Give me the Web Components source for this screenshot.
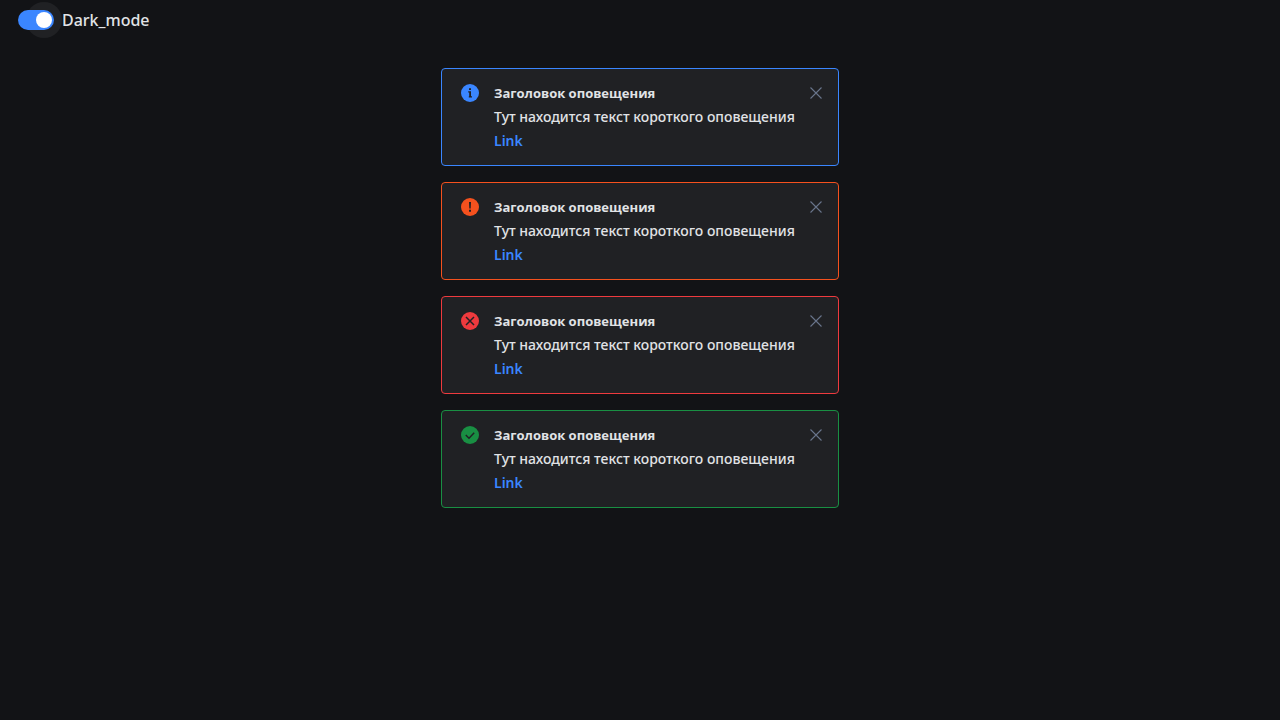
<!DOCTYPE html>
<html lang="ru">
<head>
<meta charset="utf-8">
<title>Alerts</title>
<style>
body { margin: 0; background: #121316; color: #e1e3e6; font-family: "Noto Sans", sans-serif; }
</style>
</head>
<body>
<alert-page></alert-page>

<template id="page-template">
<style>
:host { display: block; min-height: 100vh; }
main { display: grid; gap: 16px; width: 100%; max-width: 398px; margin: 28px auto 0; }
</style>
<header><mode-switch>Dark_mode</mode-switch></header>
<main>
<alert-card kind="info"><span slot="title">Заголовок оповещения</span>Тут находится текст короткого оповещения<span slot="link">Link</span></alert-card>
<alert-card kind="warning"><span slot="title">Заголовок оповещения</span>Тут находится текст короткого оповещения<span slot="link">Link</span></alert-card>
<alert-card kind="error"><span slot="title">Заголовок оповещения</span>Тут находится текст короткого оповещения<span slot="link">Link</span></alert-card>
<alert-card kind="success"><span slot="title">Заголовок оповещения</span>Тут находится текст короткого оповещения<span slot="link">Link</span></alert-card>
</main>
</template>

<template id="switch-template">
<style>
:host { display: flex; height: 40px; padding-left: 18px; }
label { display: flex; align-items: center; gap: 8px; font-size: 16px; font-weight: 500; line-height: 24px; cursor: pointer; }
input { appearance: none; display: flex; align-items: center; box-sizing: border-box; width: 36px; height: 20px; margin: 0; padding: 2px; border-radius: 10px; background: #6b7280; cursor: pointer; }
input::before { content: ""; width: 16px; height: 16px; border-radius: 50%; background: #fff; }
input:checked { background: #3a86ff; justify-content: flex-end; }
.track { position: relative; display: flex; isolation: isolate; }
.track::before { content: ""; position: absolute; z-index: -1; top: -8px; right: -8px; width: 36px; height: 36px; border-radius: 50%; background: #202124; }
</style>
<label><span class="track"><input type="checkbox" role="switch" checked></span><slot></slot></label>
</template>

<template id="card-template">
<style>
:host { --accent: #3a86ff; display: flex; box-sizing: border-box; padding: 12px 11px 12px 16px; border: 1px solid var(--accent); border-radius: 4px; background: #202124; font-size: 14px; line-height: 24px; }
:host([kind="warning"]) { --accent: #f5511e; }
:host([kind="error"]) { --accent: #ee3a3e; }
:host([kind="success"]) { --accent: #198f43; }
.icon { flex: none; width: 24px; height: 24px; margin-right: 12px; }
.body { flex: 1; min-width: 0; font-weight: 500; }
h2, p { margin: 0; font-size: inherit; font-weight: inherit; }
h2 { font-family: "Open Sans", sans-serif; font-size: 13px; font-weight: 700; }
a { display: inline-block; color: #3a86ff; font-weight: 600; text-decoration: none; }
button { flex: none; display: flex; width: 22px; height: 24px; padding: 0; border: 0; align-items: center; justify-content: center; background: none; color: #69758c; cursor: pointer; }
</style>
<svg class="icon" viewBox="0 0 24 24" aria-hidden="true"><circle cx="12" cy="12" r="9" fill="var(--accent)"/><path class="glyph"/></svg>
<div class="body">
<h2><slot name="title"></slot></h2>
<p><slot></slot></p>
<a href="#"><slot name="link"></slot></a>
</div>
<button type="button" aria-label="Закрыть"><svg width="12" height="12" viewBox="0 0 12 12" fill="none" stroke="currentColor" stroke-width="1.1"><path d="M.5.5l11 11M11.5.5l-11 11"/></svg></button>
</template>

<script>
const mount = (host, id) => {
  const root = host.attachShadow({ mode: "open" });
  root.append(document.getElementById(id).content.cloneNode(true));
  return root;
};

const glyphs = {
  info: { d: "M11 7.2h2v1.8h-2zM10.2 10.2h2.8v5.1h1v1.2h-3.2v-1.2h.4v-3.9h-1z" },
  warning: { d: "M11 7h2l-.3 6.6h-1.4zM11 14.8h2v2h-2z" },
  error: { d: "M8 8l8 8M16 8l-8 8", line: true },
  success: { d: "M7.8 12l3.2 3.2 5.2-5.4", line: true }
};

class AlertCard extends HTMLElement {
  constructor() {
    super();
    this.root = mount(this, "card-template");
    this.root.querySelector("button").addEventListener("click", () => this.remove());
  }
  connectedCallback() {
    const glyph = glyphs[this.getAttribute("kind")];
    const path = this.root.querySelector(".glyph");
    path.setAttribute("d", glyph.d);
    path.setAttribute("fill", glyph.line ? "none" : "#202124");
    if (glyph.line) {
      path.setAttribute("stroke", "#202124");
      path.setAttribute("stroke-width", "1.5");
    }
  }
}

class ModeSwitch extends HTMLElement {
  constructor() { super(); mount(this, "switch-template"); }
}

class AlertPage extends HTMLElement {
  constructor() { super(); mount(this, "page-template"); }
}

customElements.define("alert-card", AlertCard);
customElements.define("mode-switch", ModeSwitch);
customElements.define("alert-page", AlertPage);
</script>
</body>
</html>
